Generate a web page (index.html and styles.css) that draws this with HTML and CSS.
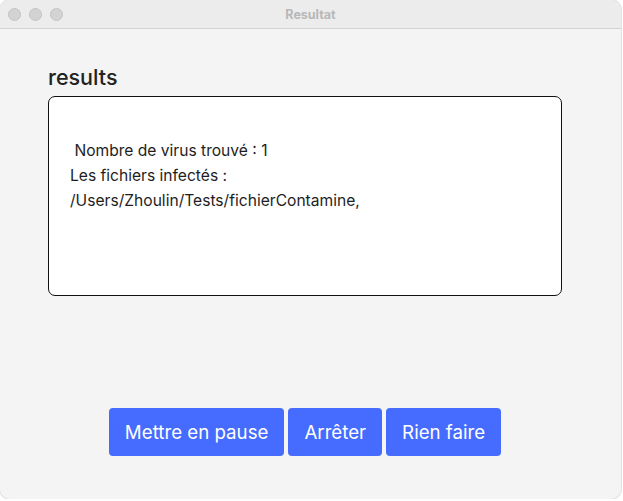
FILE: index.html
```html
<!DOCTYPE html>
<html lang="fr">
<head>
<meta charset="utf-8">
<title>Resultat</title>
<link rel="stylesheet" href="styles.css">
</head>
<body>
<div class="window">
  <div class="titlebar">
    <div class="lights">
      <span class="light"></span>
      <span class="light"></span>
      <span class="light"></span>
    </div>
    <div class="title">Resultat</div>
  </div>
  <div class="content">
    <h1 class="heading">results</h1>
    <div class="output">
      <div class="line first">&nbsp;Nombre de virus trouvé : 1</div>
      <div class="line">Les fichiers infectés :</div>
      <div class="line">/Users/Zhoulin/Tests/fichierContamine,</div>
    </div>
    <div class="actions">
      <button class="btn">Mettre en pause</button>
      <button class="btn">Arrêter</button>
      <button class="btn">Rien faire</button>
    </div>
  </div>
</div>
</body>
</html>
```
FILE: styles.css
```css
html, body {
  margin: 0;
  padding: 0;
  background: #ffffff;
}
body {
  font-family: Inter, "Liberation Sans", sans-serif;
}
.window {
  width: 621px;
  height: 499px;
  background: #f4f4f4;
  border-radius: 10px;
  overflow: hidden;
  box-shadow: 0 0 0 1px #e2e2e2;
  display: flex;
  flex-direction: column;
}
.titlebar {
  height: 28px;
  flex: none;
  background: #ececec;
  border-bottom: 1px solid #d3d3d3;
  display: flex;
  align-items: center;
  position: relative;
}
.lights {
  display: flex;
  gap: 8px;
  padding-left: 8px;
}
.light {
  width: 11px;
  height: 11px;
  border-radius: 50%;
  background: #d3d3d3;
  border: 0.5px solid #c2c2c2;
}
.title {
  position: absolute;
  left: 0;
  right: 0;
  text-align: center;
  font-size: 12.5px;
  font-weight: 700;
  color: #b8b8b8;
  pointer-events: none;
}
.content {
  padding: 0 59px 0 48px;
  display: flex;
  flex-direction: column;
}
.heading {
  margin: 34px 0 0 0;
  font-size: 21.5px;
  line-height: 28px;
  font-weight: 500;
  color: #222222;
  height: 33px;
}
.output {
  background: #ffffff;
  border: 1px solid #111111;
  border-radius: 7px;
  padding: 41px 20px 0 21px;
  box-sizing: content-box;
  height: 157px;
}
.line {
  font-size: 15.6px;
  line-height: 25px;
  color: #1e1e1e;
}
.actions {
  margin-top: 112px;
  display: flex;
  justify-content: center;
  gap: 4px;
}
.btn {
  font-family: Inter, "Liberation Sans", sans-serif;
  height: 48px;
  padding: 0 16px;
  border: none;
  border-radius: 4px;
  background: #456cff;
  color: #ffffff;
  font-size: 18.7px;
  font-weight: 400;
}
```
